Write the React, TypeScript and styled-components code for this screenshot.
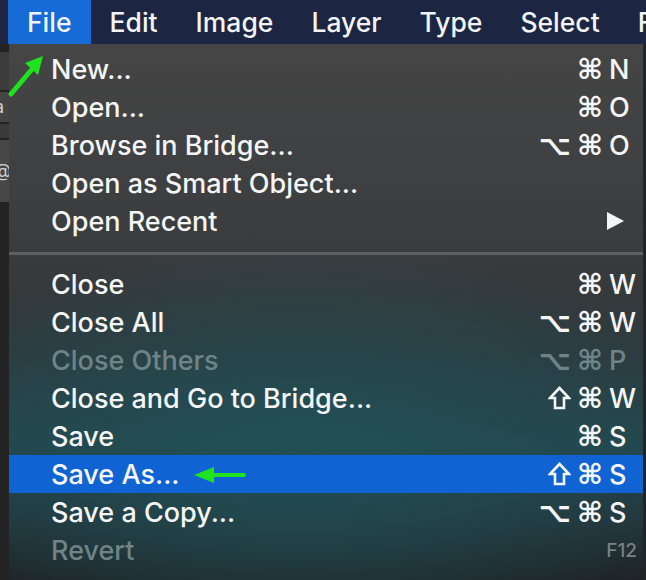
import styled, { createGlobalStyle } from "styled-components";

const Global = createGlobalStyle`
  html, body {
    margin: 0;
    padding: 0;
    background: #1e1f21;
  }
  body {
    width: 646px;
    height: 580px;
    overflow: hidden;
    font-family: Inter, "Liberation Sans", "DejaVu Sans", sans-serif;
    -webkit-font-smoothing: antialiased;
  }
`;

const Screen = styled.div`
  width: 646px;
  height: 580px;
  display: flex;
  flex-direction: column;
  position: relative;
  overflow: hidden;
`;

const MenuBar = styled.div`
  height: 44px;
  background: #1c2541;
  display: flex;
  align-items: stretch;
  padding-left: 8px;
  flex-shrink: 0;
  overflow: hidden;
`;

const BarItem = styled.div<{ $active?: boolean }>`
  padding: 0 19px;
  display: flex;
  align-items: center;
  background: ${(p) => (p.$active ? "#166bd6" : "transparent")};
  color: #f2f3f5;
  font-size: 26.5px;
  font-weight: 500;
  white-space: nowrap;
`;

const Body = styled.div`
  flex: 1;
  display: flex;
`;

const SideStrip = styled.div`
  width: 9px;
  background: #232323;
  display: flex;
  flex-direction: column;
  gap: 2px;
  padding-top: 8px;
`;

const SideBlock = styled.div<{ $h: number; $c: string }>`
  height: ${(p) => p.$h}px;
  background: ${(p) => p.$c};
  color: #cfcfcf;
  font-size: 18px;
  line-height: ${(p) => p.$h}px;
  overflow: hidden;
  text-indent: -6px;
`;

const Menu = styled.div`
  width: 634px;
  background:
    radial-gradient(ellipse 430px 210px at 290px 410px, rgba(33, 80, 86, 0.95), rgba(33, 80, 86, 0) 100%),
    linear-gradient(180deg, #454545 0px, #3e3f41 150px, #35393b 250px, #2d3a3e 310px, #24464d 400px, #22363c 470px, #1f2225 536px);
  border-right: 3px solid #222426;
  padding-top: 6px;
  display: flex;
  flex-direction: column;
`;

const Row = styled.div<{ $hl?: boolean; $off?: boolean }>`
  height: 38px;
  display: flex;
  align-items: center;
  padding-left: 42px;
  padding-right: 6px;
  background: ${(p) => (p.$hl ? "#0f63d3" : "transparent")};
  color: ${(p) => (p.$off ? "#6f8487" : "#f4f5f6")};
`;

const Label = styled.span`
  flex: 1;
  font-size: 27px;
  font-weight: 500;
  white-space: nowrap;
`;

const Shortcut = styled.span`
  display: flex;
  align-items: center;
`;

const Mods = styled.span`
  display: flex;
  align-items: center;
  justify-content: flex-end;
  gap: 6px;
  font-family: "DejaVu Sans", sans-serif;
  font-size: 28px;
  font-weight: bold;
`;

const Key = styled.span`
  width: 34px;
  padding-left: 6px;
  box-sizing: border-box;
  font-size: 27px;
  font-weight: 500;
`;

const FKey = styled.span`
  width: 38px;
  text-align: right;
  font-size: 19px;
  font-weight: 500;
  color: #7b8083;
`;

const Arrow = styled.span`
  width: 34px;
  display: flex;
  padding-left: 2px;
  box-sizing: border-box;
`;

const Separator = styled.div`
  height: 3px;
  background: #5b6062;
  margin: 12px 0 10px;
`;

const Callout = styled.svg`
  position: absolute;
  pointer-events: none;
`;

type Item = {
  label: string;
  mods?: string[];
  k?: string;
  fkey?: string;
  sub?: boolean;
  off?: boolean;
  hl?: boolean;
};

const top: Item[] = [
  { label: "New...", mods: ["⌘"], k: "N" },
  { label: "Open...", mods: ["⌘"], k: "O" },
  { label: "Browse in Bridge...", mods: ["⌥", "⌘"], k: "O" },
  { label: "Open as Smart Object..." },
  { label: "Open Recent", sub: true },
];

const bottom: Item[] = [
  { label: "Close", mods: ["⌘"], k: "W" },
  { label: "Close All", mods: ["⌥", "⌘"], k: "W" },
  { label: "Close Others", mods: ["⌥", "⌘"], k: "P", off: true },
  { label: "Close and Go to Bridge...", mods: ["⇧", "⌘"], k: "W" },
  { label: "Save", mods: ["⌘"], k: "S" },
  { label: "Save As...", mods: ["⇧", "⌘"], k: "S", hl: true },
  { label: "Save a Copy...", mods: ["⌥", "⌘"], k: "S" },
  { label: "Revert", fkey: "F12", off: true },
];

function ShiftIcon() {
  return (
    <svg width="23" height="24" viewBox="0 0 23 24">
      <path
        d="M11.5 2 L21 12 L16 12 L16 22 L7 22 L7 12 L2 12 Z"
        fill="none"
        stroke="currentColor"
        strokeWidth="2.6"
        strokeLinejoin="miter"
      />
    </svg>
  );
}

function MenuRow({ item }: { item: Item }) {
  return (
    <Row $hl={item.hl} $off={item.off}>
      <Label>{item.label}</Label>
      <Shortcut>
        {item.mods && (
          <Mods>
            {item.mods.map((m, i) =>
              m === "⇧" ? <ShiftIcon key={i} /> : <span key={i}>{m}</span>
            )}
          </Mods>
        )}
        {item.k && <Key>{item.k}</Key>}
        {item.fkey && <FKey>{item.fkey}</FKey>}
        {item.sub && (
          <Arrow>
            <svg width="20" height="20" viewBox="0 0 20 20">
              <path d="M2 1 L19 10 L2 19 Z" fill="#f4f5f6" />
            </svg>
          </Arrow>
        )}
      </Shortcut>
    </Row>
  );
}

export default function App() {
  return (
    <Screen>
      <Global />
      <MenuBar>
        <BarItem $active>File</BarItem>
        <BarItem>Edit</BarItem>
        <BarItem>Image</BarItem>
        <BarItem>Layer</BarItem>
        <BarItem>Type</BarItem>
        <BarItem>Select</BarItem>
        <BarItem>F</BarItem>
      </MenuBar>
      <Body>
        <SideStrip>
          <SideBlock $h={38} $c="#3b3b3b" />
          <SideBlock $h={30} $c="#454545">a</SideBlock>
          <SideBlock $h={14} $c="#3a3a3a" />
          <SideBlock $h={62} $c="#474747">@</SideBlock>
          <SideBlock $h={340} $c="#242424" />
        </SideStrip>
        <Menu>
          {top.map((it) => (
            <MenuRow key={it.label} item={it} />
          ))}
          <Separator />
          {bottom.map((it) => (
            <MenuRow key={it.label} item={it} />
          ))}
        </Menu>
      </Body>
      <Callout width="50" height="50" viewBox="0 0 50 50" style={{ left: 4, top: 50 }}>
        <path d="M7 44 L29 18" stroke="#1ee31e" strokeWidth="5" strokeLinecap="round" />
        <path d="M39 6 L21 13 L34 25 Z" fill="#1ee31e" />
      </Callout>
      <Callout width="60" height="20" viewBox="0 0 60 20" style={{ left: 190, top: 465 }}>
        <path d="M20 10 L54 10" stroke="#1ee31e" strokeWidth="4" strokeLinecap="round" />
        <path d="M4 10 L24 2 L24 18 Z" fill="#1ee31e" />
      </Callout>
    </Screen>
  );
}
